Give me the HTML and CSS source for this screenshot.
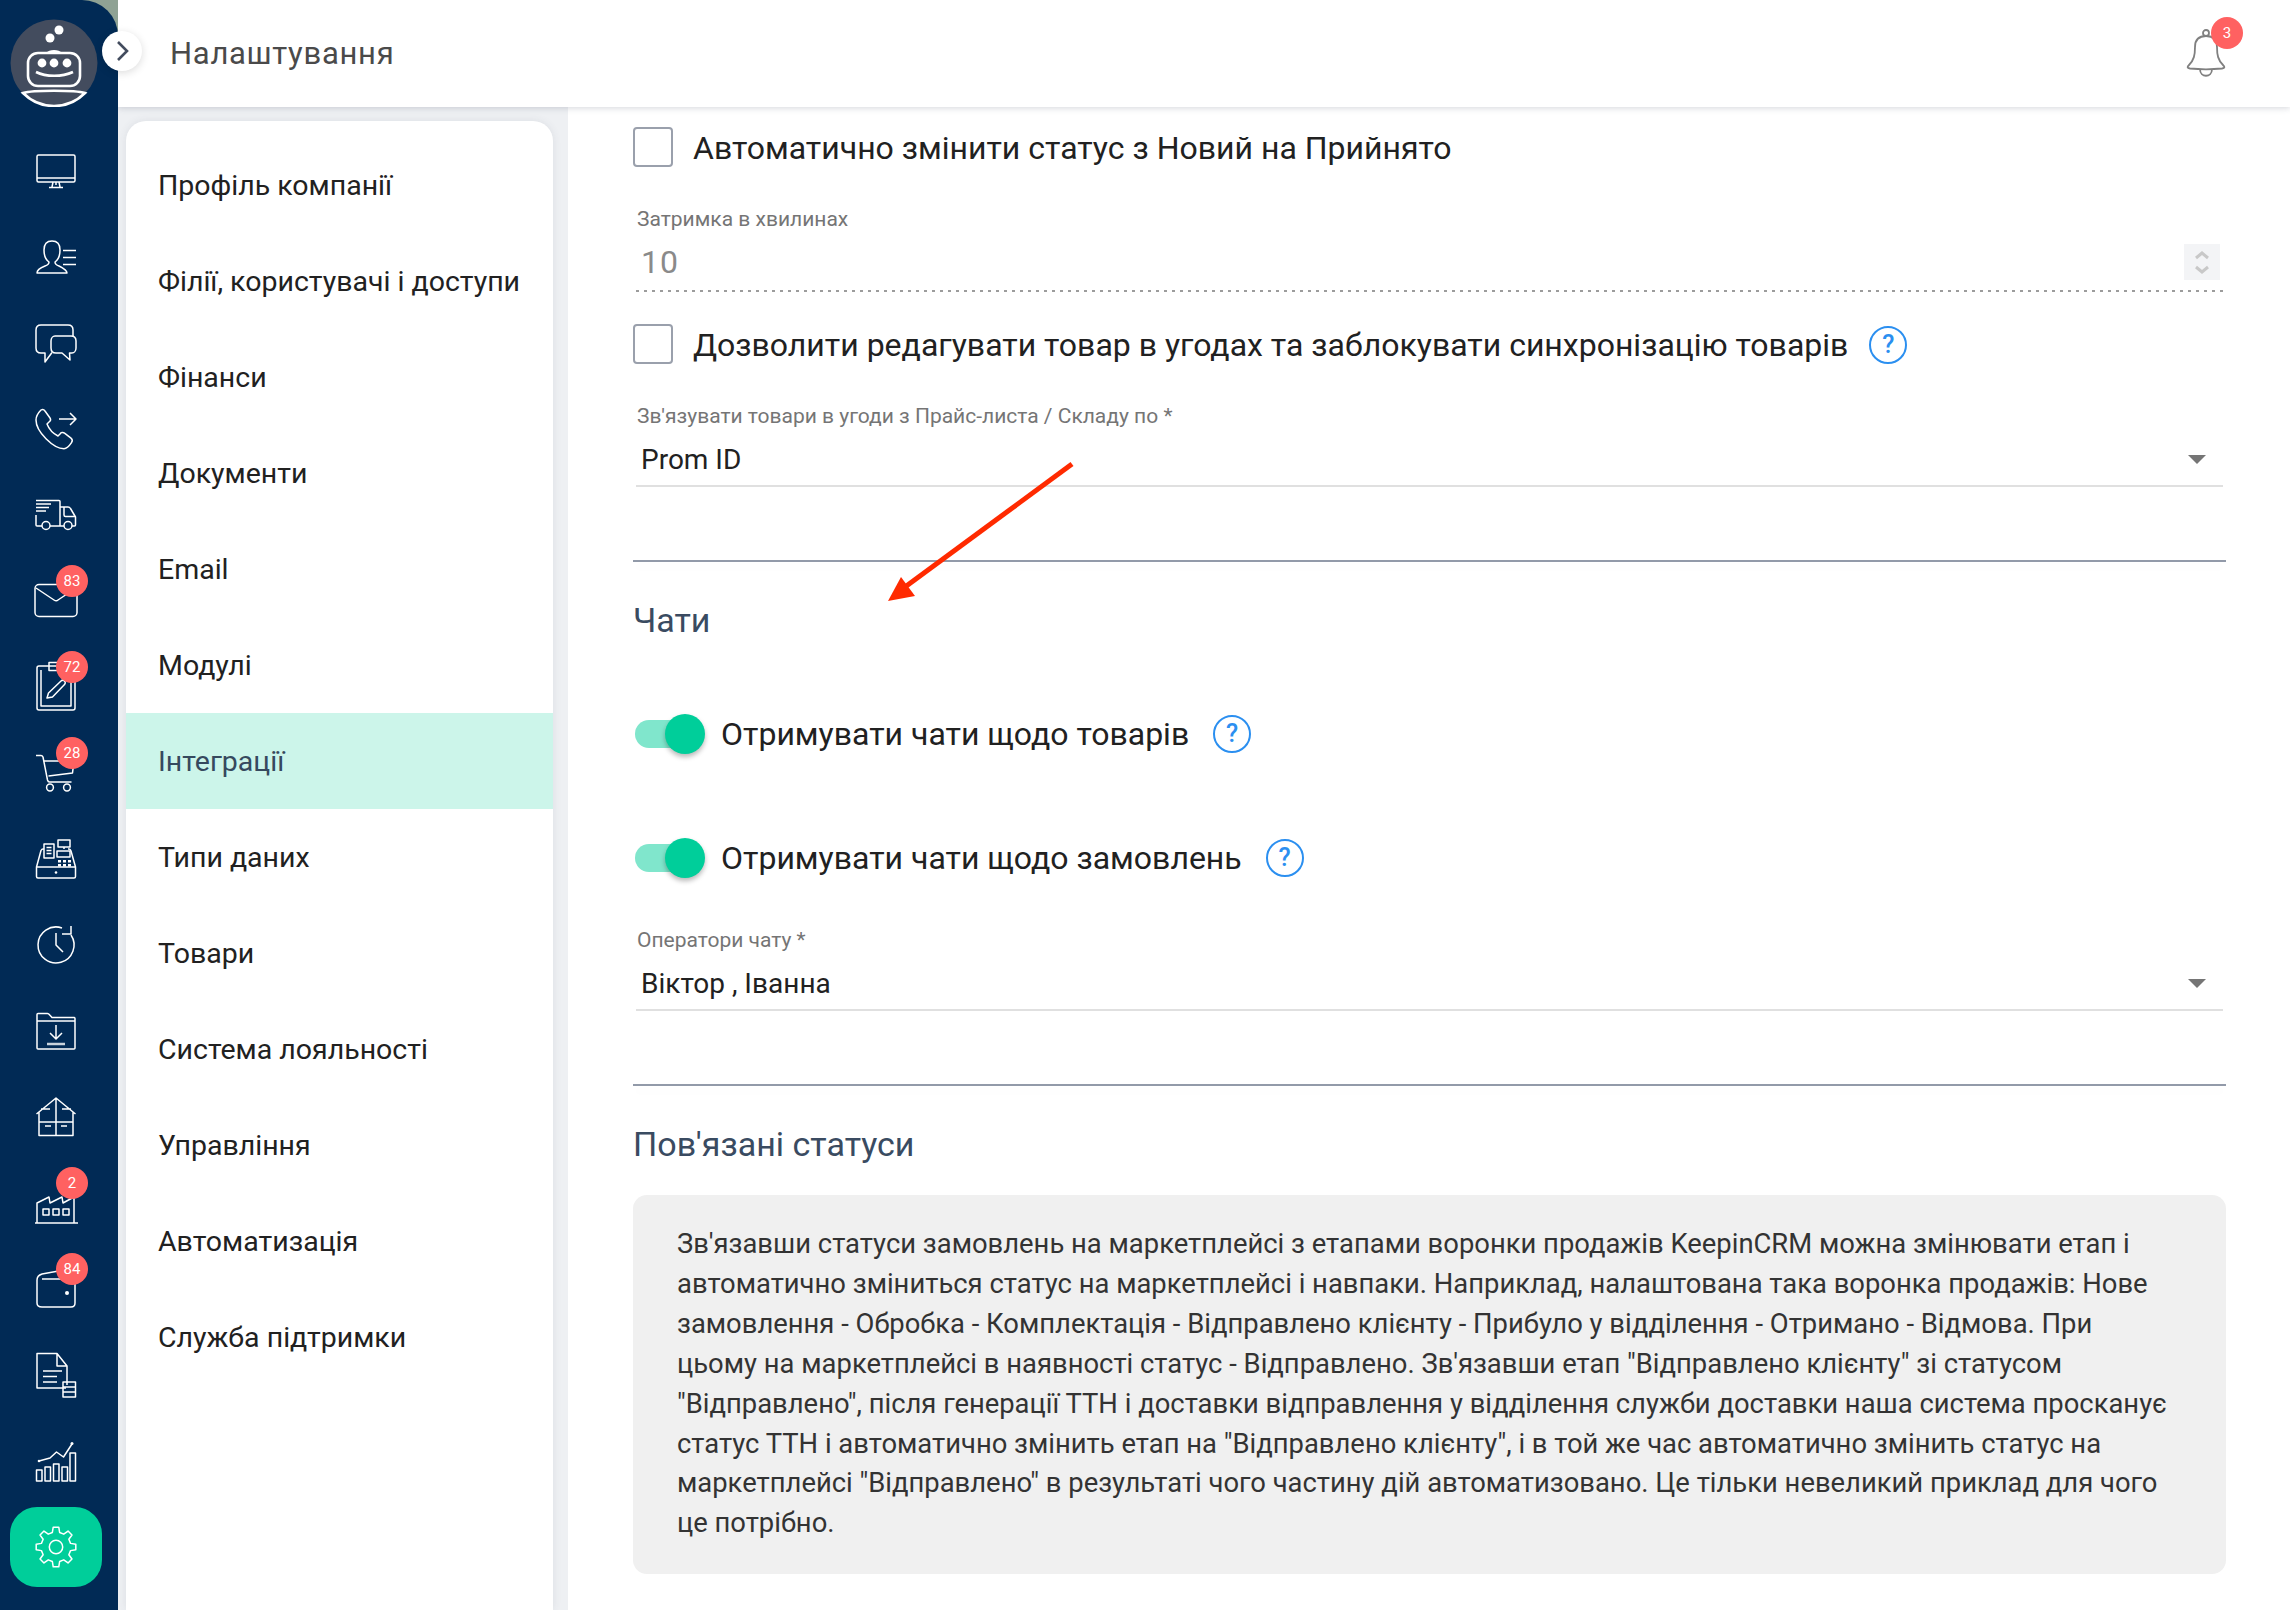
FILE: index.html
```html
<!DOCTYPE html>
<html lang="uk">
<head>
<meta charset="utf-8">
<title>Налаштування</title>
<link rel="stylesheet" href="styles.css">
</head>
<body>
<div class="app">
  <aside class="rail-slot">
    <nav class="rail">
      <div class="logo">
        <svg viewBox="0 0 88 88" width="88" height="88">
          <circle cx="44" cy="44" r="43.5" fill="#434c5e"/>
          <circle cx="40" cy="19" r="4.5" fill="#fff"/><circle cx="49" cy="11" r="4.5" fill="#fff"/>
          <rect x="18" y="34" width="52" height="33" rx="10" fill="none" stroke="#fff" stroke-width="2.6"/>
          <path d="M36 34c3-4 13-4 16 0z" fill="#fff"/>
          <circle cx="32" cy="44" r="4.400" fill="#fff"/><circle cx="44" cy="44" r="4.400" fill="#fff"/><circle cx="57" cy="44" r="4.400" fill="#fff"/>
          <path d="M26 53c10 5 26 5 37 0" fill="none" stroke="#fff" stroke-width="2.6"/>
          <path d="M13 74c10-3 52-3 62 0C66 83 55 87 44 87S22 83 13 74z" fill="none" stroke="#fff" stroke-width="2.6"/>
        </svg>
      </div>
      <a class="rail-item"><svg class="ico" viewBox="0 0 40 40"><rect x="1" y="4" width="38" height="27" rx="1.5"/><path d="M1 27h38M20 31v3M17 31l-1 5M23 31l1 5M13 36.500h14"/></svg></a>
      <a class="rail-item"><svg class="ico" viewBox="0 0 40 40"><path d="M1 36c0-3 3-5 8-7 3-1 4-2 4-4-3-2-5-7-5-12 0-6 3-9 8-9s8 3 8 9c0 5-2 10-5 12 0 2 1 3 4 4 4 2 8 4 8 7z"/><path d="M27 13.500h13M27 20.500h13M27 27.500h13"/></svg></a>
      <a class="rail-item"><svg class="ico" viewBox="0 0 40 40"><path d="M16 29.500L9 39V30H5C2 30 0 28 0 25V7C0 4 2 2 5 2H32C35 2 37 4 37 7V13"/><path d="M19 13H35C38 13 40 15 40 18V25C40 28 38 30 36 30H33.500L34 37L26 30H20C17 30 15 28 15 25V18C15 15 17 13 19 13Z"/></svg></a>
      <a class="rail-item"><svg class="ico" viewBox="0 0 40 40"><path d="M5 1c1.500-1 3-.5 4 1l5 7c1 1.500.5 3-1 4l-2 2c2 5 7 10 11 12l2-2c1-1.500 3-2 4.500-.8l6.500 5c1.500 1.200 1.500 3 .5 4.500-2 3-5 6-7.500 6-5 0-12-4-18-10S0 17 0 11C0 7 3 3 5 1z"/><path d="M23 10h17M34 4l6 6-6 6"/></svg></a>
      <a class="rail-item"><svg class="ico" viewBox="0 0 40 40"><path d="M0 5.500h23c.6 0 1 .4 1 1V31H14M6 31H1c-.6 0-1-.4-1-1V20M24 12h8c1 0 2 .6 2.500 1.500l5 8.500v8c0 .6-.4 1-1 1H36M28 31h-4M28 12v8c0 1 .5 1.500 1.500 1.500H39"/><path d="M0 9h15M0 12.500h13M0 16h10"/><circle cx="10" cy="30.500" r="4"/><circle cx="32" cy="30.500" r="4"/></svg></a>
      <a class="rail-item"><svg class="ico" viewBox="0 0 40 40"><rect x="-1" y="3.500" width="42" height="32" rx="4"/><path d="M0 7l18 12c1.500 1 3 1 4 0L40 7"/></svg><span class="badge">83</span></a>
      <a class="rail-item"><svg class="ico" viewBox="0 0 40 40"><rect x="1" y="-1" width="38" height="44" rx="2"/><path d="M5 3v36h30V3"/><rect x="13" y="-4.500" width="14" height="8"/><path d="M11 31l1.500-5L25 14c1-1 2.500-1 3.500 0s1 2.500 0 3.500L16.500 30z"/></svg><span class="badge">72</span></a>
      <a class="rail-item"><svg class="ico" viewBox="0 0 40 40"><path d="M0 2.500h5c1 0 1.500.5 2 1.500l4.500 23c.3 1.200 1 2 2 2h22M8 8h30l-1.500 12-24 3"/><circle cx="14" cy="34.500" r="3.400"/><circle cx="31" cy="34.500" r="3.400"/></svg><span class="badge">28</span></a>
      <a class="rail-item"><svg class="ico" viewBox="0 0 40 40"><path d="M8 10h-1c-1 0-1.500.5-2 1.500L0.500 28v9.500c0 1 .5 1.500 1.500 1.500h36c1 0 1.500-.5 1.500-1.500V28L35 12c-.3-1-1-2-2-2h-1M0.500 28h39"/><rect x="8" y="5" width="10" height="14"/><path d="M10.500 8.500h5M10.500 11.500h5M10.500 14.500h5"/><rect x="22" y="1" width="12" height="7"/><path d="M28 8v2"/><rect x="21" y="12" width="13" height="6"/><path class="keys" d="M22 21h3v2.500h-3zM27 21h3v2.500h-3zM32 21h3v2.500h-3zM22 25h3v2.500h-3zM27 25h3v2.500h-3zM32 25h3v2.500h-3z"/><circle class="dot" cx="20" cy="33.500" r="1.300"/></svg></a>
      <a class="rail-item"><svg class="ico" viewBox="0 0 40 40"><path d="M26 3A18 18 0 1 0 35 10"/><path d="M26 9h9V1M20 8v12l7 7"/></svg></a>
      <a class="rail-item"><svg class="ico" viewBox="0 0 40 40"><path d="M1 37V3.500c0-.8.5-1 1-1h9.500c1 0 1.500.5 2 1.200L16 6.500h22c.7 0 1 .4 1 1V37c0 .7-.4 1-1 1H2c-.7 0-1-.4-1-1zM1 10h38"/><path d="M20 14v14M14 22l6 6 6-6"/><path class="thick" d="M11 33h18"/></svg></a>
      <a class="rail-item"><svg class="ico" viewBox="0 0 40 40"><path d="M0.500 17L20 1l19.500 16M3 15.500V38.500h34V15.500M20 1v37.500M3 25h34M5 12h9M26 12h9M9 29h6M25 29h6"/></svg></a>
      <a class="rail-item"><svg class="ico" viewBox="0 0 40 40"><path d="M-1 40h43M1 40V20l12-6 1 6 12-6 1 6 11-6V40"/><rect x="7" y="26" width="6" height="6"/><rect x="17" y="26" width="6" height="6"/><rect x="27" y="26" width="6" height="6"/></svg><span class="badge">2</span></a>
      <a class="rail-item"><svg class="ico" viewBox="0 0 40 40"><path d="M1 11c0-3 2-5 5-6l22-4h3M6 10h28c3 0 5 1 5 4v20c0 2.500-1.500 4-4 4H6c-3 0-5-1.500-5-4V11"/><circle class="dot" cx="31" cy="24" r="2"/></svg><span class="badge">84</span></a>
      <a class="rail-item"><svg class="ico" viewBox="0 0 40 40"><path d="M30 33H1V-1.500h20L31 11v19M21-1.500V11h10"/><path d="M7 16h19M7 21.500h14M7 27h14"/><rect x="27" y="27" width="12.500" height="15"/><path d="M27 32h12.500M27 37h12.500"/></svg></a>
      <a class="rail-item"><svg class="ico" viewBox="0 0 40 40"><rect x="0.500" y="29" width="5.500" height="11"/><rect x="9" y="26" width="5.500" height="14"/><rect x="17.500" y="23" width="5.500" height="17"/><rect x="26" y="26" width="5.500" height="14"/><rect x="34" y="12" width="5.500" height="28"/><path d="M3 20l11-3 6.500-6 7 5L36 3"/><circle class="dot" cx="3" cy="20" r="1.300"/><circle class="dot" cx="36" cy="2.500" r="1.500"/></svg></a>
      <a class="rail-item rail-item--active"><span class="rail-pill"><svg class="ico" viewBox="0 0 40 40"><path d="M16.370 5.450L17.220 .2H22.780L23.630 5.450L27.730 7.140L32.040 4.030L35.970 7.960L32.860 12.270L34.550 16.370L39.800 17.220V22.780L34.550 23.630L32.860 27.730L35.970 32.040L32.040 35.970L27.730 32.860L23.630 34.550L22.780 39.800H17.220L16.370 34.550L12.270 32.860L7.960 35.970L4.030 32.040L7.140 27.730L5.450 23.630L.2 22.780V17.220L5.450 16.370L7.140 12.270L4.030 7.960L7.960 4.030L12.270 7.140Z"/><circle cx="20" cy="20" r="6.700"/></svg></span></a>
    </nav>
  </aside>
  <div class="column">
    <header class="topbar">
      <h1 class="title">Налаштування</h1>
      <div class="bell">
        <svg class="bell-ico" viewBox="0 0 40 48"><circle cx="20" cy="4" r="3"/><path d="M9 18c0-7 4-11 11-11s11 4 11 11c0 8 1 13 6 18 2 2 2 3-1 3.500-10 1-22 1-32 0-3-.5-3-1.500-1-3.500 5-5 6-10 6-18z"/><path d="M14 40c0 9 12 9 12 0"/></svg>
        <span class="badge badge--bell">3</span>
      </div>
    </header>
    <div class="body">
      <ul class="menu">
        <li class="menu-item">Профіль компанії</li>
        <li class="menu-item">Філії, користувачі і доступи</li>
        <li class="menu-item">Фінанси</li>
        <li class="menu-item">Документи</li>
        <li class="menu-item">Email</li>
        <li class="menu-item">Модулі</li>
        <li class="menu-item menu-item--active">Інтеграції</li>
        <li class="menu-item">Типи даних</li>
        <li class="menu-item">Товари</li>
        <li class="menu-item">Система лояльності</li>
        <li class="menu-item">Управління</li>
        <li class="menu-item">Автоматизація</li>
        <li class="menu-item">Служба підтримки</li>
      </ul>
      <main class="main">
        <div class="check-row"><span class="box"></span><span class="option">Автоматично змінити статус з Новий на Прийнято</span></div>
        <div class="field field--disabled field--first">
          <div class="field-label">Затримка в хвилинах</div>
          <div class="field-value">10<span class="spin"><svg viewBox="0 0 36 36" width="36" height="36"><path d="M12 14l6-5 6 5M12 23l6 5 6-5"/></svg></span></div>
        </div>
        <div class="check-row check-row--second"><span class="box"></span><span class="option">Дозволити редагувати товар в угодах та заблокувати синхронізацію товарів</span><span class="help">?</span></div>
        <div class="field field--after-check">
          <div class="field-label">Зв'язувати товари в угоди з Прайс-листа / Складу по *</div>
          <div class="field-value">Prom ID<span class="caret"></span></div>
        </div>
        <hr class="rule">
        <h2 class="section section--chats">Чати</h2>
        <div class="toggle-row toggle-row--first"><span class="toggle"><span class="knob"></span></span><span class="option">Отримувати чати щодо товарів</span><span class="help">?</span></div>
        <div class="toggle-row"><span class="toggle"><span class="knob"></span></span><span class="option">Отримувати чати щодо замовлень</span><span class="help">?</span></div>
        <div class="field field--operators">
          <div class="field-label">Оператори чату *</div>
          <div class="field-value">Віктор , Іванна<span class="caret"></span></div>
        </div>
        <hr class="rule">
        <h2 class="section">Пов'язані статуси</h2>
        <div class="note">Зв'язавши статуси замовлень на маркетплейсі з етапами воронки продажів KeepinCRM можна змінювати етап і<br>автоматично зміниться статус на маркетплейсі і навпаки. Наприклад, налаштована така воронка продажів: Нове<br>замовлення - Обробка - Комплектація - Відправлено клієнту - Прибуло у відділення - Отримано - Відмова. При<br>цьому на маркетплейсі в наявності статус - Відправлено. Зв'язавши етап "Відправлено клієнту" зі статусом<br>"Відправлено", після генерації ТТН і доставки відправлення у відділення служби доставки наша система просканує<br>статус ТТН і автоматично змінить етап на "Відправлено клієнту", і в той же час автоматично змінить статус на<br>маркетплейсі "Відправлено" в результаті чого частину дій автоматизовано. Це тільки невеликий приклад для чого<br>це потрібно.</div>
      </main>
    </div>
  </div>
</div>
<button class="rail-toggle" type="button" aria-label="Розгорнути"><svg viewBox="0 0 40 40" width="40" height="40"><path d="M16 11l9 9-9 9"/></svg></button>
<svg class="annotation" viewBox="0 0 2290 1610" width="2290" height="1610"><path class="annotation-line" d="M1072 464L905 587"/><path class="annotation-head" d="M888 601L901 577L915 596z"/></svg>
</body>
</html>
```
FILE: styles.css
```css
* { box-sizing: border-box; }
html, body { margin: 0; padding: 0; height: 1610px; overflow: hidden; }
body { font-family: Roboto, "Noto Sans", sans-serif; color: #212121; background: #eef0f3; position: relative; }

.app { display: flex; width: 2290px; height: 1610px; }

.rail-slot { width: 118px; flex: none; background: linear-gradient(#8fa294 0, #8fa294 50px, #eef0f3 50px); position: relative; z-index: 3; }
.rail { height: 100%; background: #012a55; border-top-right-radius: 36px; display: flex; flex-direction: column; align-items: stretch; padding-top: 19px; }
.logo { height: 88px; padding-left: 10px; margin-bottom: 21px; flex: none; }
.logo svg { display: block; }
.rail-item { height: 86px; flex: none; display: flex; align-items: center; justify-content: center; width: 112px; position: relative; }
.rail-pill { width: 92px; height: 80px; background: #00ce9a; border-radius: 27px; display: flex; align-items: center; justify-content: center; }
.ico { width: 40px; height: 40px; overflow: visible; fill: none; stroke: #fff; stroke-width: 1.5; stroke-linejoin: round; }
.ico .keys, .ico .dot { fill: #fff; stroke: none; }
.ico .thick { stroke-width: 2.5; stroke: #c9d3dc; }

.badge { position: absolute; left: 56px; top: 7px; width: 32px; height: 32px; border-radius: 50%; background: #ff6161; color: #fff; font-size: 15px; line-height: 32px; text-align: center; }

.column { flex: 1; min-width: 0; display: flex; flex-direction: column; }
.topbar { height: 107px; flex: none; background: #fff; display: flex; align-items: center; justify-content: space-between; padding: 0 48px 0 52px; box-shadow: 0 1px 6px rgba(60, 70, 90, .22); position: relative; z-index: 2; }
.title { margin: 0; font-size: 31px; font-weight: 400; color: #4a4a4a; letter-spacing: .7px; }
.bell { position: relative; width: 56px; height: 48px; margin-top: -1px; }
.bell-ico { width: 40px; height: 48px; position: absolute; left: 0; top: 0; fill: none; stroke: #808080; stroke-width: 1.8; overflow: visible; }
.badge--bell { left: 25px; top: -12px; }

.body { flex: 1; min-height: 0; display: flex; }
.menu { list-style: none; margin: 14px 0 0 8px; padding: 16px 0 0; width: 427px; flex: none; background: #fff; border-radius: 20px 20px 0 0; box-shadow: 0 0 8px rgba(60, 70, 90, .1); }
.menu-item { height: 96px; padding-left: 32px; display: flex; align-items: center; font-size: 28.500px; color: #212121; }
.menu-item--active { background: #ccf5ea; color: #36495e; }

.main { flex: 1; min-width: 0; margin-left: 15px; background: #fff; padding: 20px 64px 0 65px; }

.check-row { display: flex; align-items: center; height: 40px; }
.check-row--second { margin-top: 32px; }
.check-row .option, .check-row .help { margin-top: 2px; }
.box { width: 40px; height: 40px; flex: none; border: 2px solid #9aa0ac; border-radius: 4px; margin-right: 20px; }
.option { font-size: 32px; color: #212121; white-space: nowrap; }
.help { width: 38px; height: 38px; flex: none; border: 2px solid #2b8ff0; border-radius: 50%; color: #2b8ff0; font-size: 25px; font-weight: 500; line-height: 34px; text-align: center; margin-left: 21px; }
.toggle-row .help { margin-left: 24px; }

.field { margin: 0 3px; }
.field--first { margin-top: 33px; }
.field--after-check { margin-top: 33px; }
.field--operators { margin-top: 43px; }
.field-label { height: 38px; line-height: 38px; padding-left: 1px; font-size: 21px; color: #757575; }
.field-value { height: 52px; position: relative; display: flex; align-items: center; padding-left: 5px; padding-bottom: 1px; font-size: 28px; color: #212121; border-bottom: 2px solid #e0e0e0; }
.field--disabled .field-value { color: #8a8a8a; font-size: 32px; height: 54px; padding-bottom: 7px; border-bottom: 0; letter-spacing: 1px; background: repeating-linear-gradient(90deg, #9c9c9c 0, #9c9c9c 3px, transparent 3px, transparent 8px) left bottom / 100% 2px no-repeat; }
.spin { position: absolute; right: 3px; top: 6px; width: 36px; height: 36px; background: #f3f4f6; }
.spin svg { display: block; fill: none; stroke: #c8c8c8; stroke-width: 3; }
.caret { position: absolute; right: 17px; top: 20px; width: 0; height: 0; border-left: 9px solid transparent; border-right: 9px solid transparent; border-top: 9px solid #757575; }

.rule { margin: 73px 0 0; border: 0; height: 2px; background: #929aa9; box-shadow: 0 6px 10px rgba(60, 70, 90, .03); }
.section { margin: 36px 0 0; height: 44px; line-height: 44px; font-size: 34px; font-weight: 400; color: #3a4b61; }

.toggle-row { display: flex; align-items: center; height: 40px; margin-top: 84px; }
.toggle-row--first { margin-top: 72px; }
.toggle { width: 70px; height: 40px; flex: none; position: relative; margin: 0 16px 0 2px; }
.toggle::before { content: ""; position: absolute; left: 0; top: 6px; width: 60px; height: 28px; border-radius: 14px; background: #80e6cc; }
.knob { position: absolute; left: 30px; top: 0; width: 40px; height: 40px; border-radius: 50%; background: #00ce9a; box-shadow: 0 3px 5px rgba(0, 0, 0, .28); }

.note { margin-top: 29px; height: 379px; background: #f0f0f0; border-radius: 14px; padding: 30px 44px; font-size: 27.400px; line-height: 39.900px; color: #333; white-space: nowrap; }

.rail-toggle { position: absolute; left: 102px; top: 31px; width: 40px; height: 40px; padding: 0; border: 0; border-radius: 50%; background: #fff; box-shadow: 0 2px 8px rgba(0, 0, 0, .14); z-index: 4; }
.rail-toggle svg { display: block; fill: none; stroke: #434c5e; stroke-width: 2.6; }

.annotation { position: absolute; left: 0; top: 0; pointer-events: none; z-index: 5; }
.annotation-line { fill: none; stroke: #ff2a00; stroke-width: 5; }
.annotation-head { fill: #ff2a00; }
```
